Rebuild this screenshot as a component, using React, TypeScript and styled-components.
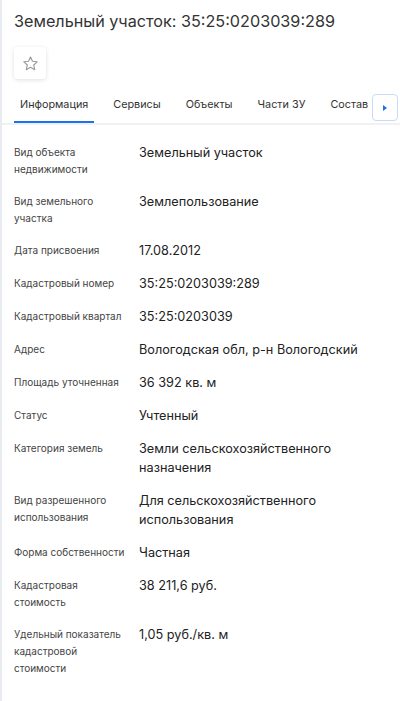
import * as React from "react";
import styled, {createGlobalStyle} from "styled-components";

const GlobalStyle = createGlobalStyle`
    html, body {
        margin: 0;
        padding: 0;
        background: #fff;
    }
    body {
        font-family: Inter, "Noto Sans", "Liberation Sans", sans-serif;
        -webkit-font-smoothing: antialiased;
    }
`;

const Page = styled.div`
    min-height: 701px;
    border-left: 2px solid #e8ebf0;
    box-sizing: border-box;
    background: #fff;
`;

const Header = styled.div`
    padding: 9px 14px 0 12px;
`;

const Title = styled.h1`
    margin: 0;
    font-size: 16.2px;
    line-height: 24px;
    font-weight: 400;
    color: #333;
`;

const StarButton = styled.button`
    margin-top: 14px;
    width: 32px;
    height: 32px;
    display: flex;
    align-items: center;
    justify-content: center;
    border: none;
    border-radius: 4px;
    background: #fff;
    box-shadow: 0 1px 4px rgba(0, 0, 0, 0.13);
    padding: 0;
    cursor: pointer;
`;

const TabBar = styled.div`
    margin-top: 10px;
    display: flex;
    align-items: flex-start;
    border-bottom: 2px solid #f0f1f4;
    padding-left: 12px;
    padding-right: 2px;
`;

const TabList = styled.div`
    flex: 1;
    display: flex;
    gap: 13px;
    overflow: hidden;
    white-space: nowrap;
`;

const Tab = styled.div<{active?: boolean}>`
    flex-shrink: 0;
    padding: 0 6px;
    height: 32px;
    line-height: 32px;
    font-size: 10.8px;
    color: #333;
    border-bottom: 2px solid ${p => p.active ? "#1a73e8" : "transparent"};
    cursor: pointer;
`;

const ScrollButton = styled.button`
    flex-shrink: 0;
    margin-top: 5px;
    width: 26px;
    height: 27px;
    border: 1px solid #c9dcf6;
    border-radius: 4px;
    background: #fff;
    display: flex;
    align-items: center;
    justify-content: center;
    padding: 0;
    box-sizing: border-box;
`;

const Arrow = styled.span`
    width: 0;
    height: 0;
    border-top: 3.5px solid transparent;
    border-bottom: 3.5px solid transparent;
    border-left: 4px solid #1a73e8;
`;

const InfoList = styled.div`
    padding: 17.5px 14px 0 12px;
`;

const Row = styled.div`
    display: flex;
    gap: 13px;
    padding-bottom: 14px;
`;

const Label = styled.div`
    width: 112px;
    flex-shrink: 0;
    font-size: 10px;
    line-height: 17px;
    color: #444;
    padding-top: 1px;
`;

const Value = styled.div`
    flex: 1;
    font-size: 12.7px;
    line-height: 19px;
    color: #222;
`;

const tabs = ["Информация", "Сервисы", "Объекты", "Части ЗУ", "Состав"];

const rows: [string, string][] = [
    ["Вид объекта недвижимости", "Земельный участок"],
    ["Вид земельного участка", "Землепользование"],
    ["Дата присвоения", "17.08.2012"],
    ["Кадастровый номер", "35:25:0203039:289"],
    ["Кадастровый квартал", "35:25:0203039"],
    ["Адрес", "Вологодская обл, р-н Вологодский"],
    ["Площадь уточненная", "36 392 кв. м"],
    ["Статус", "Учтенный"],
    ["Категория земель", "Земли сельскохозяйственного назначения"],
    ["Вид разрешенного использования", "Для сельскохозяйственного использования"],
    ["Форма собственности", "Частная"],
    ["Кадастровая стоимость", "38 211,6 руб."],
    ["Удельный показатель кадастровой стоимости", "1,05 руб./кв. м"],
];

const StarIcon = () => (
    <svg width="17" height="17" viewBox="0 0 24 24" fill="none" stroke="#9a9a9a" strokeWidth="1.6" strokeLinejoin="round">
        <path d="M12 2.8l2.8 6.1 6.6.7-4.9 4.5 1.4 6.6L12 17.4l-5.9 3.3 1.4-6.6-4.9-4.5 6.6-.7z"/>
    </svg>
);

export default function App() {
    const [activeTab, setActiveTab] = React.useState(0);
    return (
        <Page>
            <GlobalStyle/>
            <Header>
                <Title>Земельный участок: 35:25:0203039:289</Title>
                <StarButton aria-label="В избранное"><StarIcon/></StarButton>
            </Header>
            <TabBar>
                <TabList>
                    {tabs.map((t, i) =>
                        <Tab key={t} active={i === activeTab} onClick={() => setActiveTab(i)}>{t}</Tab>
                    )}
                </TabList>
                <ScrollButton aria-label="Далее"><Arrow/></ScrollButton>
            </TabBar>
            <InfoList>
                {rows.map(([label, value]) =>
                    <Row key={label}>
                        <Label>{label}</Label>
                        <Value>{value}</Value>
                    </Row>
                )}
            </InfoList>
        </Page>
    );
}
